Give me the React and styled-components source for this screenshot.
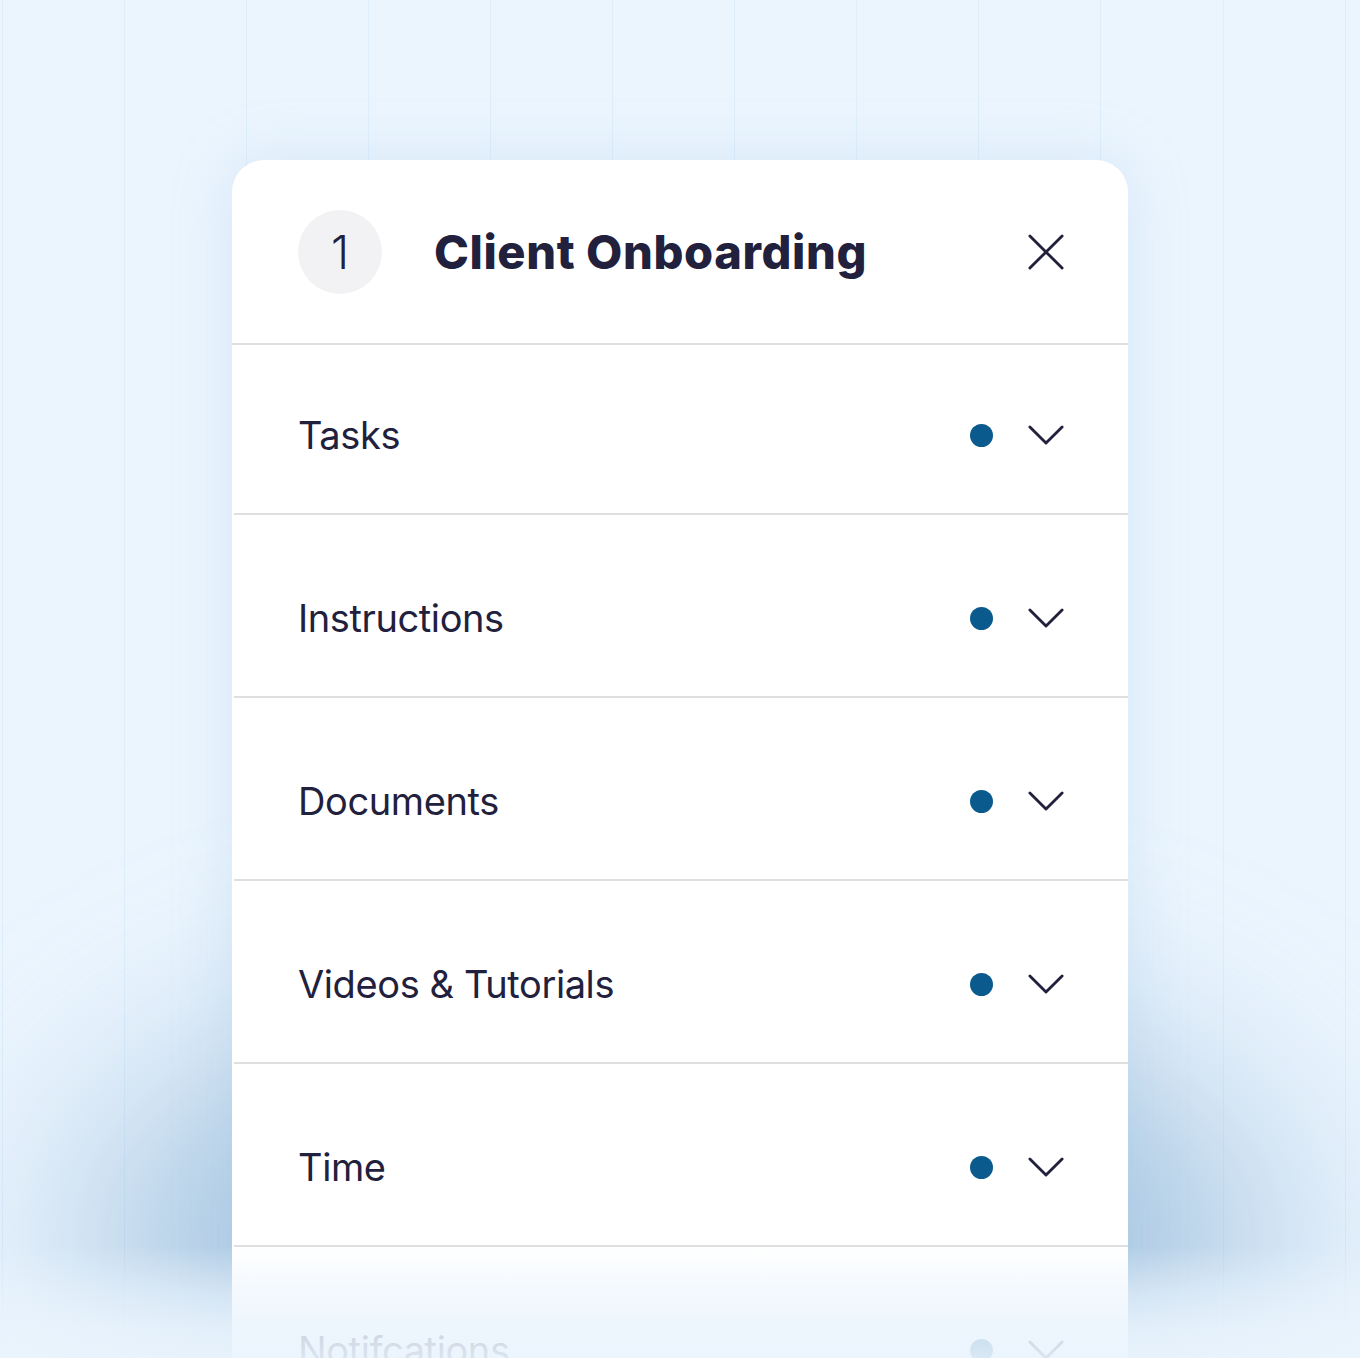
import React from "react";
import styled, { createGlobalStyle } from "styled-components";

const Global = createGlobalStyle`
  html, body { margin: 0; padding: 0; }
  body { font-family: "Inter", "Noto Sans", sans-serif; background: #ebf5fe; }
  * { box-sizing: border-box; }
`;

const Page = styled.div`
  position: relative;
  width: 1360px;
  height: 1358px;
  overflow: hidden;
  padding-top: 160px;
  display: flex;
  justify-content: center;
  align-items: flex-start;
  background-color: #ebf5fe;
  background-image: repeating-linear-gradient(
    to right,
    transparent 0px,
    transparent 1.5px,
    rgba(205, 229, 247, 0.45) 1.5px,
    rgba(205, 229, 247, 0.45) 2.5px,
    transparent 2.5px,
    transparent 122.1px
  );
`;

const Glow = styled.div`
  position: absolute;
  left: 70px;
  right: 70px;
  top: 980px;
  height: 520px;
  border-radius: 50%;
  background: rgba(120, 165, 205, 0.55);
  filter: blur(100px);
`;

const Card = styled.div`
  position: relative;
  width: 896px;
  background: #ffffff;
  border-radius: 32px 32px 0 0;
  box-shadow: 0 0 60px rgba(150, 190, 225, 0.25);
  display: flex;
  flex-direction: column;
`;

const Header = styled.div`
  display: flex;
  align-items: center;
  height: 185px;
  padding: 0 64px 0 66px;
  border-bottom: 2px solid #dedfe1;
`;

const Badge = styled.div`
  width: 84px;
  height: 84px;
  border-radius: 50%;
  background: #f2f2f4;
  display: flex;
  align-items: center;
  justify-content: center;
  font-size: 46px;
  font-weight: 300;
  color: #22213d;
  flex: none;
`;

const Title = styled.h1`
  margin: 0 0 0 52px;
  flex: 1;
  font-size: 47px;
  font-weight: 800;
  letter-spacing: 0.6px;
  color: #22213d;
`;

const IconButton = styled.button`
  border: 0;
  background: none;
  padding: 0;
  width: 36px;
  height: 36px;
  display: flex;
  align-items: center;
  justify-content: center;
  color: #22213d;
`;

const Row = styled.div`
  display: flex;
  align-items: center;
  height: 40px;
  box-sizing: content-box;
  padding: ${(p) => (p.$first ? "70px" : "83px")} 64px 58px 64px;
  border-bottom: 2px solid #dedfe1;
  margin-left: 2px;
`;

const Label = styled.span`
  flex: 1;
  font-size: 38px;
  font-weight: 400;
  letter-spacing: -0.4px;
  color: #22213d;
`;

const Dot = styled.span`
  width: 23px;
  height: 23px;
  border-radius: 50%;
  background: #0b5a8d;
  margin-right: 35px;
`;

const Fade = styled.div`
  position: absolute;
  left: 0;
  right: 0;
  bottom: 0;
  height: 112px;
  background: linear-gradient(
    to bottom,
    rgba(234, 244, 253, 0) 0%,
    rgba(234, 244, 253, 0.55) 40%,
    rgba(234, 244, 253, 0.85) 75%,
    rgba(234, 244, 253, 0.92) 100%
  );
`;

const Chevron = () => (
  <svg width="38" height="22" viewBox="0 0 38 22" fill="none">
    <polyline
      points="2,2.5 19,19.5 36,2.5"
      stroke="#22213d"
      strokeWidth="3"
      strokeLinecap="round"
      strokeLinejoin="round"
    />
  </svg>
);

const Close = () => (
  <svg width="38" height="38" viewBox="0 0 38 38" fill="none">
    <path
      d="M2 2 L36 36 M36 2 L2 36"
      stroke="#22213d"
      strokeWidth="3"
      strokeLinecap="round"
    />
  </svg>
);

const items = [
  "Tasks",
  "Instructions",
  "Documents",
  "Videos & Tutorials",
  "Time",
  "Notifcations",
];

export default function App() {
  return (
    <>
      <Global />
      <Page>
        <Glow />
        <Card>
          <Header>
            <Badge>1</Badge>
            <Title>Client Onboarding</Title>
            <IconButton aria-label="Close">
              <Close />
            </IconButton>
          </Header>
          {items.map((label, i) => (
            <Row key={label} $first={i === 0}>
              <Label>{label}</Label>
              <Dot />
              <IconButton aria-label="Expand">
                <Chevron />
              </IconButton>
            </Row>
          ))}
        </Card>
        <Fade />
      </Page>
    </>
  );
}
